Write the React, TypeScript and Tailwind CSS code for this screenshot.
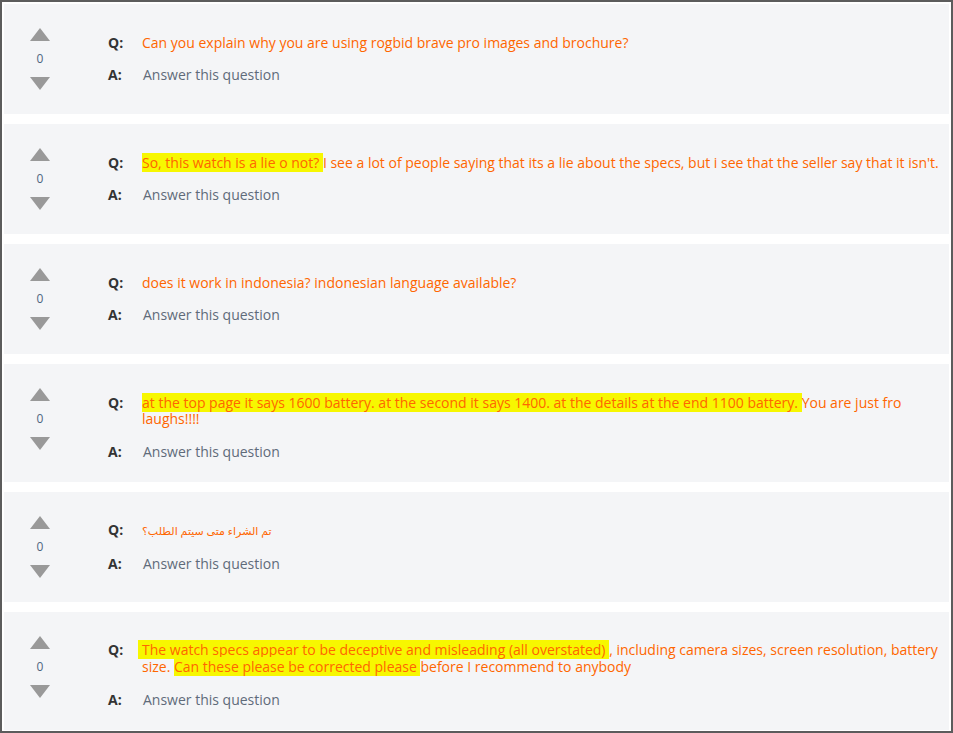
type Segment = { text: string; mark?: boolean; lead?: boolean; small?: boolean }

const questions: Segment[][] = [
  [{ text: 'Can you explain why you are using rogbid brave pro images and brochure?' }],
  [
    { text: 'So, this watch is a lie o not? ', mark: true },
    { text: "I see a lot of people saying that its a lie about the specs, but i see that the seller say that it isn't." },
  ],
  [{ text: 'does it work in indonesia? indonesian language available?' }],
  [
    {
      text: 'at the top page it says 1600 battery. at the second it says 1400. at the details at the end 1100 battery. ',
      mark: true,
    },
    { text: 'You are just fro laughs!!!!' },
  ],
  [{ text: 'تم الشراء متى سيتم الطلب؟', small: true }],
  [
    {
      text: 'The watch specs appear to be deceptive and misleading (all overstated) ',
      mark: true,
      lead: true,
    },
    { text: ', including camera sizes, screen resolution, battery size. ' },
    { text: 'Can these please be corrected please ', mark: true },
    { text: 'before I recommend to anybody' },
  ],
]

function UpArrow() {
  return (
    <svg width="20" height="13" viewBox="0 0 20 13" className="block">
      <polygon points="10,0 20,13 0,13" fill="#999999" />
    </svg>
  )
}

function DownArrow() {
  return (
    <svg width="20" height="13" viewBox="0 0 20 13" className="block">
      <polygon points="0,0 20,0 10,13" fill="#999999" />
    </svg>
  )
}

function QuestionCard({ segments }: { segments: Segment[] }) {
  return (
    <div className="flex bg-[#f4f5f7] pt-6 pb-5 pr-[6px]">
      {/* votes */}
      <div className="flex w-[72px] shrink-0 flex-col items-center pb-1">
        <UpArrow />
        <span className="mt-[10px] text-[12px] leading-4 text-[#4f6580]">0</span>
        <div className="mt-[10px]">
          <DownArrow />
        </div>
      </div>
      <div className="ml-8 flex flex-1 flex-col pt-[6.6px]">
        <div className="flex text-[14px] leading-[16.8px]">
          <span className="w-[34px] shrink-0 font-bold text-[#333333]">Q:</span>
          <p className="flex-1 text-[#ff6600]">
            {segments.map((s, i) =>
              s.mark ? (
                <span
                  key={i}
                  className={s.lead ? 'bg-[#f7f700] -ml-1 pl-1' : 'bg-[#f7f700]'}
                >
                  {s.text}
                </span>
              ) : (
                <span key={i} className={s.small ? 'text-[11px]' : ''}>
                  {s.text}
                </span>
              ),
            )}
          </p>
        </div>
        <div className="mt-[13.6px] flex text-[14px] leading-5">
          <span className="w-[34px] shrink-0 font-bold text-[#333333]">A:</span>
          <span className="pl-px text-[#5f6b7a]">Answer this question</span>
        </div>
      </div>
    </div>
  )
}

export default function App() {
  return (
    <div
      className="flex w-[953px] flex-col gap-[10px] border-2 border-[#5c5c5c] bg-white px-[2px] pt-[2px] pb-px"
      style={{ fontFamily: '"Open Sans", "Noto Sans", "DejaVu Sans", sans-serif' }}
    >
      {questions.map((q, i) => (
        <QuestionCard key={i} segments={q} />
      ))}
    </div>
  )
}
